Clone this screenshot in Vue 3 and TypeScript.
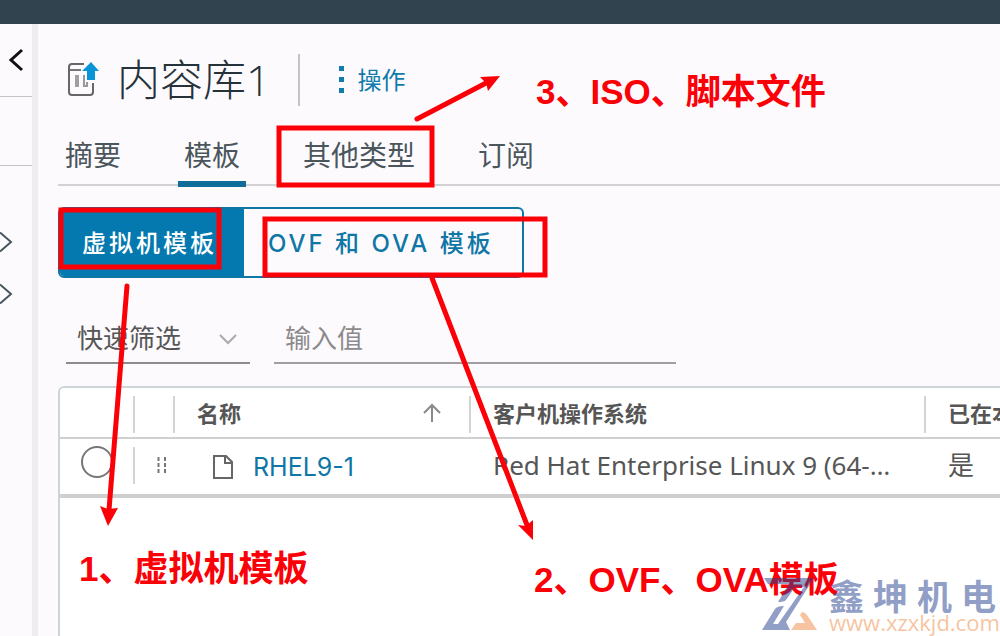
<script setup lang="ts">
import { ref } from 'vue'

const tabs = ['摘要', '模板', '其他类型', '订阅']
const activeTab = ref('模板')
const kinds = ['虚拟机模板', 'OVF 和 OVA 模板']
const activeKind = ref('虚拟机模板')
const filterText = ref('')
const picked = ref('')
const rows = [{ name: 'RHEL9-1', os: 'Red Hat Enterprise Linux 9 (64-bit)', local: '是' }]
</script>

<template>
  <div class="app">
    <header class="topbar"></header>
    <div class="body">
      <aside class="rail">
        <div class="rail-head">
          <button class="icon-btn" aria-label="收起">
            <svg width="16" height="24" viewBox="0 0 16 24"><path d="M14 2 3 12 14 22" fill="none" stroke="#111" stroke-width="3" /></svg>
          </button>
        </div>
        <div class="rail-tabs"></div>
        <div class="rail-tree">
          <button v-for="n in 2" :key="n" class="icon-btn" aria-label="展开">
            <svg width="14" height="24" viewBox="0 0 14 24"><path d="M0 2.500 11 12 0 21.500" fill="none" stroke="#45565c" stroke-width="2" /></svg>
          </button>
        </div>
      </aside>

      <main class="main">
        <div class="title-row">
          <svg class="lib-icon" width="34" height="38" viewBox="0 0 34 38">
            <path d="M18 3H6Q3 3 3 6V31Q3 34 6 34H24Q27 34 27 31V22" fill="none" stroke="#666" stroke-width="2" />
            <path d="M4 9H15" stroke="#777" stroke-width="2" />
            <path d="M11 14V26" stroke="#a0a0a0" stroke-width="4" />
            <path d="M18 14V26M17 25H22M21 21V26" fill="none" stroke="#999" stroke-width="2" />
            <path d="M25 1 33 10H29V19H21V10H16Z" fill="#0a94d8" />
          </svg>
          <h1>内容库1</h1>
          <button class="actions">
            <svg width="6" height="30" viewBox="0 0 6 30"><path d="M1 1h5v5H1zM1 12h5v5H1zM1 23h5v5H1z" fill="#0f7cab" /></svg>
            操作
          </button>
        </div>

        <nav class="tabs">
          <button v-for="t in tabs" :key="t" class="tab" :class="{ active: t === activeTab }" @click="activeTab = t">{{ t }}</button>
        </nav>

        <div class="kinds">
          <button v-for="k in kinds" :key="k" class="kind" :class="{ active: k === activeKind }" @click="activeKind = k">{{ k }}</button>
        </div>

        <div class="filters">
          <div class="select-wrap">
            <select aria-label="快速筛选"><option>快速筛选</option></select>
            <svg class="caret" width="18" height="12" viewBox="0 0 18 12"><path d="M1 2 9 10 17 2" fill="none" stroke="#aaa" stroke-width="2" /></svg>
          </div>
          <input v-model="filterText" class="value" type="text" placeholder="输入值" aria-label="输入值" />
        </div>

        <div class="grid">
          <table>
            <colgroup><col class="c-pick" /><col class="c-grip" /><col class="c-name" /><col class="c-os" /><col class="c-local" /></colgroup>
            <thead>
              <tr>
                <th></th>
                <th></th>
                <th>
                  <div class="sort">名称
                    <svg width="18" height="20" viewBox="0 0 18 20"><path d="M9 19V2M1 10 9 2 17 10" fill="none" stroke="#888" stroke-width="2" /></svg>
                  </div>
                </th>
                <th>客户机操作系统</th>
                <th>已在本地存储</th>
              </tr>
            </thead>
            <tbody>
              <tr v-for="r in rows" :key="r.name">
                <td><input v-model="picked" class="radio" type="radio" name="row" :value="r.name" :aria-label="r.name" /></td>
                <td class="grip">
                  <svg width="10" height="16" viewBox="0 0 10 16"><path d="M1.500 0v4M8 0v4M1.500 6v4M8 6v4M1.500 12v4M8 12v4" stroke="#777" stroke-width="2" /></svg>
                </td>
                <td>
                  <div class="name">
                    <svg width="22" height="26" viewBox="0 0 22 26"><path d="M2 2H14L20 8V24H2ZM13 2V9H20" fill="none" stroke="#666" stroke-width="2" /></svg>
                    <a href="#">{{ r.name }}</a>
                  </div>
                </td>
                <td class="os">{{ r.os }}</td>
                <td class="local">{{ r.local }}</td>
              </tr>
            </tbody>
          </table>
        </div>
      </main>
    </div>

    <div class="notes">
      <svg class="marks" width="1000" height="636" viewBox="0 0 1000 636">
        <g fill="none" stroke="#fb0007" stroke-width="5">
          <rect x="279" y="128" width="153" height="57" />
          <rect x="61" y="210" width="158" height="57" />
          <rect x="265" y="219" width="280" height="56" />
          <path d="M417 119 488 82M127 286 109 510M432 278 527 525" stroke-linecap="round" />
        </g>
        <path d="M500 76 488 91 486 83 480 77ZM108 526 100 506 108 509 118 508ZM533 540 518 525 526 526 533 520Z" fill="#fb0007" />
      </svg>
      <span class="note n1">1、虚拟机模板</span>
      <span class="note n2">2、OVF、OVA模板</span>
      <span class="note n3">3、ISO、脚本文件</span>
      <div class="brand">
        <svg width="60" height="56" viewBox="0 0 60 56">
          <path d="M1 54 14 33Q16 30 23 30L12 48H17L43 11H34L25 24Q23 26 17 26L28 8H7L3 2H53L25 46 29 54Z" fill="#26418f" />
          <path d="M41 36Q44 36 46 39L56 54H30L35 47H44L39 39Z" fill="#f18b45" />
        </svg>
        <div class="brand-text"><strong>鑫坤机电</strong><span>www.xzxkjd.com</span></div>
      </div>
    </div>
  </div>
</template>

<style>
html, body { margin: 0; overflow: hidden; }
</style>

<style scoped>
* { box-sizing: border-box; }
.app {
  position: relative;
  display: flex;
  flex-direction: column;
  min-height: 100vh;
  overflow: hidden;
  background: #fdfafe;
  color: #565656;
  font: 26px/32px "Noto Sans", "Noto Sans CJK SC", sans-serif;
}
button, input, select { font: inherit; color: inherit; margin: 0; padding: 0; border: 0; background: none; border-radius: 0; }
button { cursor: pointer; }
svg { flex: none; display: block; }
.topbar { height: 24px; background: #324350; }
.body { flex: 1; display: flex; }
.rail { width: 38px; flex: none; border-right: 6px solid #ededf0; }
.rail-head { height: 73px; display: flex; align-items: center; padding-left: 8px; border-bottom: 1px solid #c4c4c8; }
.rail-tabs { height: 69px; border-bottom: 1px solid #c4c4c8; }
.rail-tree { padding-top: 64px; display: flex; flex-direction: column; gap: 28px; }
.main { flex: 1; min-width: 0; display: flex; flex-direction: column; padding-left: 20px; }
.title-row { display: flex; align-items: center; height: 112px; padding-left: 8px; }
h1 { margin: 0 0 0 17px; font-size: 43px; line-height: 52px; font-weight: 300; color: #26323a; font-family: "Open Sans", "Noto Sans CJK SC", sans-serif; white-space: nowrap; }
.actions { display: flex; align-items: center; gap: 14px; height: 52px; margin-left: 27px; padding-left: 38px; border-left: 2px solid #c4c4c8; font-size: 24px; color: #0f7cab; }
.tabs { display: flex; height: 50px; border-bottom: 2px solid #d2d2d6; gap: 51px; padding-left: 1px; }
.tab { height: 51px; padding: 0 6px 8px; font-size: 28px; color: #4a565c; border-bottom: 6px solid transparent; }
.tab.active { border-color: #0e6e99; }
.kinds { display: flex; align-self: flex-start; height: 71px; margin-top: 21px; border: 2px solid #0f77a6; border-radius: 6px; overflow: hidden; }
.kind { padding: 2px 28px 0 24px; font: 500 24px/32px Inter, "Noto Sans CJK SC", sans-serif; letter-spacing: 3px; color: #0f77a6; white-space: nowrap; }
.kind.active { background: #0479af; color: #fff; padding: 2px 27px 0 22px; }
.filters { display: flex; gap: 24px; margin-top: 37px; padding-left: 8px; }
.select-wrap { position: relative; width: 184px; }
select { width: 100%; height: 49px; padding: 0 11px 2px; appearance: none; border-bottom: 2px solid #8c8c8c; }
.caret { position: absolute; right: 13px; top: 18px; pointer-events: none; }
.value { width: 402px; height: 49px; padding: 0 11px 2px; border-bottom: 2px solid #a09ea2; outline: 0; }
.value::placeholder { color: #8c8a8c; opacity: 1; }
.grid { flex: 1; margin-top: 22px; border: 2px solid #cfd4d8; border-right: 0; border-bottom: 0; border-radius: 6px 0 0 0; background: #fff; overflow: hidden; }
table { width: 100%; border-collapse: collapse; table-layout: fixed; }
.c-pick { width: 75px; }
.c-grip { width: 40px; }
.c-name { width: 296px; }
.c-os { width: 455px; }
th, td { position: relative; height: 50px; padding: 0 22px; text-align: left; font-weight: 400; white-space: nowrap; overflow: hidden; }
th { border-bottom: 2px solid #cfcfcf; font-size: 22px; font-weight: 700; }
td { height: 58px; border-bottom: 4px solid #cfcfcf; }
th:not(:last-child)::after, td:first-child::after { content: ""; position: absolute; right: 0; top: 8px; height: 37px; width: 2px; background: #d4d4d4; }
.sort, .name { display: flex; align-items: center; justify-content: space-between; }
.sort { padding-right: 8px; }
.name { justify-content: flex-start; gap: 19px; padding-left: 15px; }
td.os, td.local { padding-bottom: 4px; text-overflow: ellipsis; }
a { color: #0f77a6; text-decoration: none; font-family: Inter, sans-serif; font-size: 25px; }
.radio { display: block; width: 32px; height: 32px; margin-bottom: 10px; appearance: none; border: 2px solid #777; border-radius: 50%; }
td:first-child { padding: 0 0 0 21px; }
td.grip { padding: 0 0 4px 22px; }
.notes { position: absolute; inset: 0; pointer-events: none; }
.marks { position: absolute; left: 0; top: 0; }
.note { position: absolute; color: #fb0007; font: 700 35px/40px "Liberation Sans", "Noto Sans CJK SC", sans-serif; white-space: nowrap; }
.n1 { left: 79px; top: 549px; }
.n2 { left: 534px; top: 560px; }
.n3 { left: 536px; top: 72px; }
.brand { position: absolute; left: 761px; top: 576px; display: flex; gap: 8px; opacity: 0.5; }
.brand-text { display: flex; flex-direction: column; white-space: nowrap; }
.brand strong { font: 700 35px/38px "Noto Sans CJK SC", sans-serif; letter-spacing: 9px; color: #26418f; }
.brand span { font: 22px/16px "Open Sans", sans-serif; color: #f18b45; }
</style>
